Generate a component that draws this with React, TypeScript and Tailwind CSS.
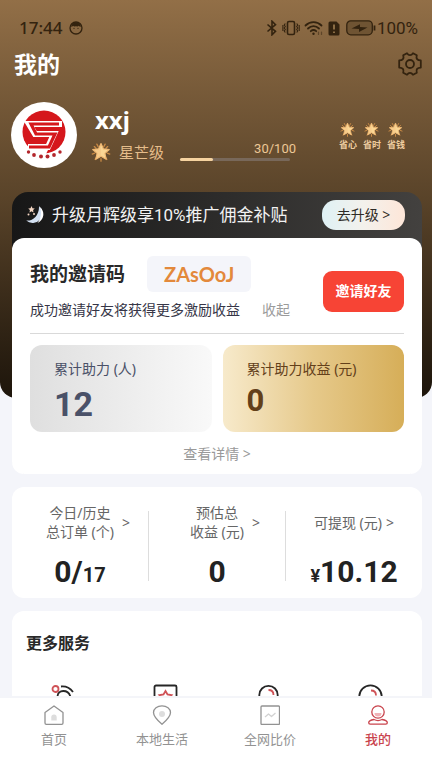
import type { ReactNode } from 'react';

function StarIcon({ className }: { className: string }) {
  return (
    <svg viewBox="0 0 24 24" className={className} aria-hidden="true">
      <g stroke="#c98a45" strokeWidth="1.6" strokeLinecap="round">
        <path d="M7 2.5l1.6 3M17 2.5l-1.6 3M1.5 14.5l3-1.2M22.5 14.5l-3-1.2M12 23v-3M4 5.5l2 2M20 5.5l-2 2M5 21l1-2M19 21l-1-2" />
      </g>
      <path
        d="M12 1.8l2.9 6.4 7 .8-5.2 4.7 1.5 6.9L12 17.2l-6.2 3.4 1.5-6.9L2.1 9l7-.8z"
        fill="#fbd694"
        stroke="#f0b872"
        strokeWidth="1.4"
        strokeLinejoin="round"
      />
      <path d="M12 3v14l-5.6 3 1.6-6.5L3 9.3l6.4-.8z" fill="#f3bd7c" opacity="0.4" />
    </svg>
  );
}

function StatusBar() {
  return (
    <div className="flex h-10 items-center pt-4 pr-[14px] pl-[19px] text-[#33230f]">
      <span className="text-[17px] leading-6 font-medium">17:44</span>
      <svg viewBox="0 0 14 14" className="ml-1.5 h-3.5 w-3.5" aria-hidden="true">
        <circle cx="7" cy="7" r="6" fill="none" stroke="currentColor" strokeWidth="1.3" />
        <path d="M2 5.6C2.6 3 4.6 1.2 7 1.2s4.6 1.8 5 4.4c-1 .5-1.6-.4-2.200-.9-.8.9-1.800.9-2.800.2-1 .7-2.200.7-3-.1-.5.6-1 1.200-2 .8z" fill="currentColor" />
        <circle cx="5" cy="7.3" r=".6" fill="currentColor" />
        <circle cx="9" cy="7.3" r=".6" fill="currentColor" />
      </svg>
      <div className="ml-auto flex items-center gap-1">
        <svg viewBox="0 0 12 16" className="h-4 w-3" fill="none" stroke="currentColor" strokeWidth="1.6" aria-hidden="true">
          <path d="M1.500 4.500l8 6.800L6 14.800V1.200l3.500 3.500-8 6.800" />
        </svg>
        <svg viewBox="0 0 18 16" className="h-4 w-[18px]" fill="none" stroke="currentColor" strokeWidth="1.6" aria-hidden="true">
          <rect x="5.500" y="1.500" width="7" height="13" rx="1.500" />
          <path d="M3.300 3.500l-1 1.500 1 1.500-1 1.500 1 1.500-1 1.500 1 1.500M.9 5v6M14.700 3.500l1 1.500-1 1.500 1 1.500-1 1.500 1 1.500-1 1.500M17.200 5v6" strokeWidth="1.100" />
        </svg>
        <svg viewBox="0 0 20 16" className="h-4 w-5" fill="none" stroke="currentColor" strokeWidth="1.8" strokeLinecap="round" aria-hidden="true">
          <path d="M1.500 5.500c4.500-4.500 11.500-4.500 16 0M4 8.500c3.200-3.200 7.800-3.200 11 0M6.800 11.200c1.700-1.500 3.700-1.500 5.400 0" />
          <circle cx="9.500" cy="13.800" r="1.200" fill="currentColor" stroke="none" />
          <path d="M14.500 12v2.500M17.500 12v2.500" strokeWidth="1.200" opacity="0.5" />
        </svg>
        <svg viewBox="0 0 12 15" className="h-[15px] w-3" aria-hidden="true">
          <path d="M2 .5h6.500l3 3V13a1.500 1.500 0 01-1.500 1.500H2A1.500 1.500 0 01.5 13V2A1.500 1.500 0 012 .5z" fill="currentColor" />
          <path d="M6 3.500v5M6 10.500v1.500" stroke="#a98657" strokeWidth="1.500" />
        </svg>
        <svg viewBox="0 0 30 16" className="ml-0.5 h-4 w-[30px]" aria-hidden="true">
          <rect x=".8" y=".8" width="25.500" height="14" rx="4" fill="#6f5433" stroke="currentColor" strokeWidth="1.300" />
          <path d="M28.500 5.500v5" stroke="currentColor" strokeWidth="1.800" />
          <path d="M5.500 8.500L14 4.200v2.800l7.500.6L13 12V9z" fill="currentColor" />
        </svg>
      </div>
      <span className="ml-px font-[Roboto] text-[17px] leading-6">100%</span>
    </div>
  );
}

function Logo() {
  return (
    <svg viewBox="0 0 66 66" className="h-[66px] w-[66px] shrink-0" role="img" aria-label="头像">
      <circle cx="33" cy="33" r="33" fill="#fff" />
      <circle cx="33" cy="30" r="21.500" fill="#d5171c" />
      <path d="M10 46h28l-3 6H16z" fill="#fff" />
      <g fill="none" strokeLinejoin="miter">
        <path d="M51 22H18l6 10h19l-6 13H17" stroke="#fff" strokeWidth="6" />
        <path d="M48 22H20l5 10h19l-6 13H18" stroke="#d5171c" strokeWidth="3.200" />
      </g>
      <g fill="#b3262c">
        <circle cx="17.500" cy="50" r="1.700" />
        <circle cx="23" cy="53" r="1.900" />
        <circle cx="30" cy="54.500" r="2" />
        <circle cx="36.500" cy="54.500" r="2" />
        <circle cx="43" cy="53" r="1.900" />
        <circle cx="49" cy="50" r="1.700" />
      </g>
    </svg>
  );
}

const perks = ['省心', '省时', '省钱'];

function Profile() {
  return (
    <div className="flex items-start pt-[14px] pr-[27px] pl-[11px]">
      <Logo />
      <div className="ml-[18px] flex-1">
        <h2 className="text-2xl leading-9 font-bold text-white">xxj</h2>
        <div className="flex items-start text-[#e5bd8b]">
          <div className="flex h-7 items-center">
            <StarIcon className="-ml-1 h-5 w-5" />
            <span className="ml-2 text-[15px] leading-5">星芒级</span>
          </div>
          <div className="ml-4 w-[116px]">
            <p className="pt-0.5 text-right font-[Roboto] text-[13px] leading-[18px] text-[#edc896]">30/100</p>
            <div className="mr-1.5 h-[3px] rounded-full bg-[#78685a]">
              <div className="h-[3px] w-[30%] rounded-full bg-[#f6d3a0]" />
            </div>
          </div>
        </div>
      </div>
      <ul className="flex gap-1.5 pt-5">
        {perks.map((perk) => (
          <li key={perk} className="flex flex-col items-center">
            <StarIcon className="h-[15px] w-[15px]" />
            <span className="text-[9px] leading-4 font-bold text-[#efcda0]">{perk}</span>
          </li>
        ))}
      </ul>
    </div>
  );
}

function InviteCard() {
  return (
    <section className="rounded-xl bg-white px-[18px] pt-[18px] pb-2.5">
      <div className="flex items-center justify-between">
        <div>
          <div className="flex items-center">
            <h2 className="text-[19px] leading-7 font-bold text-[#292929]">我的邀请码</h2>
            <span className="ml-[22px] rounded-md bg-[#f4f5fa] px-[17px] py-1 font-[Lato] text-xl leading-7 font-bold text-[#e3893b]">
              ZAsOoJ
            </span>
          </div>
          <div className="mt-2 flex items-center text-sm leading-5">
            <p className="text-[#363647]">成功邀请好友将获得更多激励收益</p>
            <button type="button" className="ml-[22px] text-[#9b9b9b]">收起</button>
          </div>
        </div>
        <button type="button" className="mt-1.5 h-[41px] w-[81px] rounded-[9px] bg-[#f74435] text-sm font-bold text-white">
          邀请好友
        </button>
      </div>
      <div className="mt-[13px] grid grid-cols-2 gap-[11px] border-t border-[#d9d9d9] pt-[11px]">
        <div className="h-[87px] rounded-xl bg-linear-to-r from-[#dfdfdf] to-[#f9f9f9] px-6 pt-3 text-[#4a5168]">
          <p className="text-sm leading-6">累计助力 (人)</p>
          <p className="font-[Roboto] text-[34px] leading-[46px] font-bold">12</p>
        </div>
        <div className="h-[87px] rounded-xl bg-linear-to-r from-[#f7eacb] via-[#e6c98a] to-[#d6ae58] px-6 pt-3 text-[#63401a]">
          <p className="text-sm leading-6">累计助力收益 (元)</p>
          <p className="font-[Roboto] text-[31px] leading-10 font-bold">0</p>
        </div>
      </div>
      <button type="button" className="mx-auto mt-3 block text-sm leading-5 text-[#999999]">
        查看详情 &gt;
      </button>
    </section>
  );
}

function Stat({ label, twoLines, children }: { label: ReactNode; twoLines?: boolean; children: ReactNode }) {
  return (
    <div className="flex flex-1 flex-col items-center">
      <button
        type="button"
        className={`flex h-[38px] items-center text-sm leading-[19px] text-[#666666] ${twoLines ? 'gap-2 pl-4' : 'gap-1'}`}
      >
        <span>{label}</span>
        <span>&gt;</span>
      </button>
      <p className="mt-[13px] font-[Roboto] text-[30px] leading-9 font-bold text-[#222222]">{children}</p>
    </div>
  );
}

function OrdersCard() {
  return (
    <section className="mt-[13px] flex rounded-xl bg-white pt-4 pb-2">
      <Stat twoLines label={<>今日/历史<br />总订单 (个)</>}>
        0/<span className="text-xl">17</span>
      </Stat>
      <div className="mt-2 h-[70px] w-px bg-[#dddddd]" />
      <Stat twoLines label={<>预估总<br />收益 (元)</>}>0</Stat>
      <div className="mt-2 h-[70px] w-px bg-[#dddddd]" />
      <Stat label="可提现 (元)">
        <span className="text-lg">¥</span>10.12
      </Stat>
    </section>
  );
}

const services = [
  {
    name: '推广',
    icon: (
      <>
        <circle cx="4.500" cy="5" r="3" stroke="#cf5257" />
        <path d="M10 2.500c5-.5 9 1.500 12 5.500M6.500 13c0-8 11-8 13 0" />
      </>
    ),
  },
  {
    name: '收藏',
    icon: (
      <>
        <rect x="1.500" y="1.500" width="22" height="23" rx="1.500" />
        <path d="M12.500 7l2 3.500 4 .7-3 3 .8 4-3.800-2-3.800 2 .8-4-3-3 4-.7z" stroke="#cf5257" />
      </>
    ),
  },
  {
    name: '客服',
    icon: (
      <>
        <circle cx="12.500" cy="11" r="9.200" />
        <path d="M12.500 6c3 0 5 2 5 5" stroke="#cf5257" />
      </>
    ),
  },
  {
    name: '帮助',
    icon: (
      <>
        <circle cx="12.500" cy="12.500" r="11.200" />
        <path d="M13 6.500c3 0 5 2 5 5" stroke="#cf5257" />
      </>
    ),
  },
];

function ServicesCard() {
  return (
    <section className="mt-[13px] rounded-xl bg-white pt-5 pb-6">
      <h2 className="px-[14px] text-base leading-6 font-bold text-[#292929]">更多服务</h2>
      <div className="mt-[29px] grid grid-cols-4">
        {services.map((s) => (
          <button key={s.name} type="button" aria-label={s.name} className="flex justify-center">
            <svg viewBox="0 0 25 25" className="h-[25px] w-[25px]" fill="none" stroke="#262626" strokeWidth="1.800">
              {s.icon}
            </svg>
          </button>
        ))}
      </div>
    </section>
  );
}

const tabs = [
  {
    name: '首页',
    icon: (
      <>
        <path d="M1 7.500L10 1l9 6.500V18a1.300 1.300 0 01-1.300 1.300H2.300A1.300 1.300 0 011 18z" />
        <path d="M7.300 15.500v-3.300a2.700 2.700 0 015.400 0v3.300z" fill="#dddddd" stroke="none" />
      </>
    ),
  },
  {
    name: '本地生活',
    icon: (
      <>
        <path d="M10 19.300C5 15 1.500 11.500 1.500 7.500 1.500 3.500 5.300.8 10 .8s8.500 2.700 8.500 6.700c0 4-3.500 7.500-8.500 11.800z" />
        <circle cx="10" cy="9" r="3" fill="#dddddd" stroke="none" />
      </>
    ),
  },
  {
    name: '全网比价',
    icon: (
      <>
        <rect x="1" y="1" width="18.500" height="18.500" rx="1" />
        <path d="M5 12l3.500-3 3 2.500L15.500 8" stroke="#d2d2d2" />
      </>
    ),
  },
  {
    name: '我的',
    active: true,
    icon: (
      <>
        <path d="M6.500 8h7a3.500 3.500 0 01-7 0z" fill="#f0b3b8" stroke="none" />
        <circle cx="10" cy="7" r="6.200" />
        <path d="M6 14.500c-3 .5-5.300 1.700-5.300 3.300 0 .9.500 1.400 1.500 1.400h15.600c1 0 1.500-.5 1.500-1.400 0-1.600-2.300-2.800-5.300-3.300-2.500 1.300-5.500 1.300-8 0z" />
      </>
    ),
  },
];

function TabBar() {
  return (
    <nav className="grid h-[72px] shrink-0 grid-cols-4 border-t-2 border-[#f4f5f9] bg-white pt-[7px]">
      {tabs.map((tab) => (
        <a
          key={tab.name}
          href="#"
          className={`flex flex-col items-center gap-1 text-[13px] leading-5 ${tab.active ? 'font-medium text-[#c9444d]' : 'text-[#929292]'}`}
        >
          <svg viewBox="0 0 20 20" className="h-5 w-5" fill="none" stroke="currentColor" strokeWidth="1.300" strokeLinejoin="round" aria-hidden="true">
            {tab.icon}
          </svg>
          {tab.name}
        </a>
      ))}
    </nav>
  );
}

export default function App() {
  return (
    <div className="flex h-screen flex-col bg-[#f4f5fa] font-['Noto_Sans','Noto_Sans_CJK_SC',sans-serif]">
      <main className="min-h-0 flex-1 overflow-y-auto [scrollbar-width:none]">
        <header className="rounded-b-2xl bg-linear-to-b from-[#926f47] via-[#594329] to-[#1d150b] pb-[230px]">
          <StatusBar />
          <div className="flex h-12 items-center justify-between pr-2.5 pl-[14px]">
            <h1 className="text-[23px] leading-8 font-bold text-white">我的</h1>
            <button type="button" aria-label="设置" className="text-[#33230f]">
              <svg viewBox="0 0 24 24" className="h-6 w-6" fill="none" stroke="currentColor" strokeWidth="1.800" strokeLinejoin="round">
                <path d="M9 1.200C10 2.700 11 3.200 12 3.200s2-.5 3-2l3.800 2.100c-.6 1.900-.3 3 .3 3.800.7.900 1.700 1.300 3.700 1.300v7.200c-2 0-3 .4-3.700 1.300-.6.800-.9 1.900-.3 3.800L15 22.800c-1-1.500-2-2-3-2s-2 .5-3 2l-3.800-2.100c.6-1.900.3-3-.3-3.800-.7-.9-1.700-1.300-3.700-1.300V8.400c2 0 3-.4 3.700-1.300.6-.8.900-1.900.3-3.800z" />
                <circle cx="12" cy="12" r="4" />
              </svg>
            </button>
          </div>
          <Profile />
        </header>

        {/* cards overlap the lower part of the header */}
        <div className="-mt-[206px] pr-2.5 pl-3">
          <div className="rounded-2xl bg-linear-to-r from-[#171717] to-[#43413f]">
            <div className="flex h-[46px] items-center pr-[17px] pl-[13px]">
              <svg viewBox="0 0 20 20" className="h-5 w-5" aria-hidden="true">
                <path d="M14 1a9.500 9.500 0 11-12.800 14.500C7.500 16.500 14.500 10.500 14 1z" fill="#d3e0f2" />
                <path d="M15 2a9.500 9.500 0 01-2.500 16c3.500-4 4.500-10 2.500-16z" fill="#fff" />
                <path d="M6.500 1l1 2.200 2.300.3-1.700 1.600.4 2.300-2-1.100-2 1.100.4-2.300L3.200 3.500l2.300-.3z" fill="#f5d7c4" />
                <circle cx="3.500" cy="9.500" r="1" fill="#f5d7c4" />
                <circle cx="9" cy="9" r="1" fill="#f5d7c4" />
              </svg>
              <p className="ml-[7px] flex-1 text-[17px] leading-6 whitespace-nowrap text-[#f2f2f2]">
                升级月辉级享<span className="font-[Roboto]">10%</span>推广佣金补贴
              </p>
              <button
                type="button"
                className="h-[30px] w-[83px] rounded-[14px] bg-linear-to-r from-[#dff1f5] via-[#f3f1ec] to-[#fde6d8] text-sm text-[#2f2b26]"
              >
                去升级 &gt;
              </button>
            </div>
            <InviteCard />
          </div>
          <OrdersCard />
          <ServicesCard />
        </div>
      </main>
      <TabBar />
    </div>
  );
}
